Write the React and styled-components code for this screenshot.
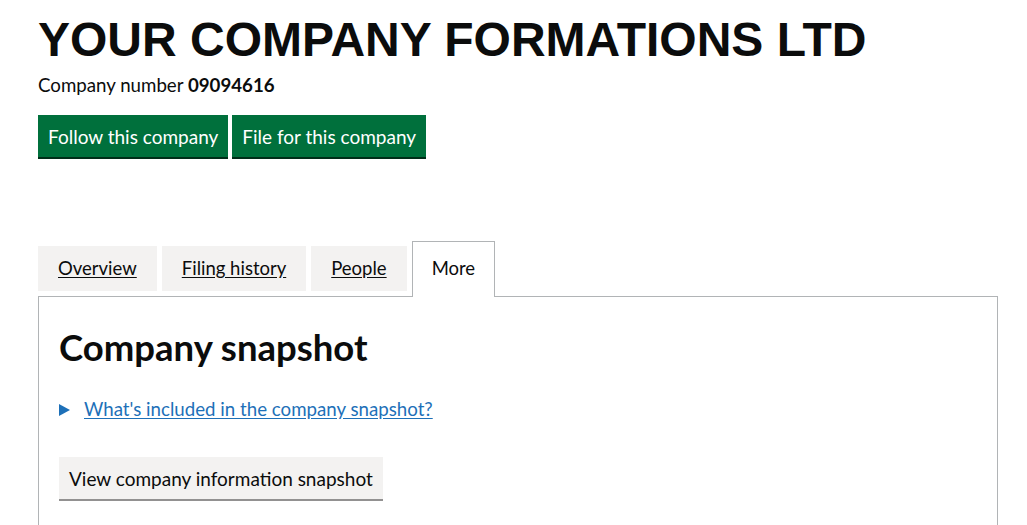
import React, { useState } from 'react';
import styled, { createGlobalStyle } from 'styled-components';

const GlobalStyle = createGlobalStyle`
    body {
        margin: 0;
        background: #ffffff;
        color: #0b0c0c;
        font-family: Lato, "Liberation Sans", Arial, sans-serif;
    }
`;

const Page = styled.main`
    width: 960px;
    margin-left: 38px;
    padding-top: 12px;
`;

const Title = styled.h1`
    margin: 0;
    font-family: "Liberation Sans", Arial, sans-serif;
    font-weight: 700;
    font-size: 48px;
    line-height: 56px;
`;

const CompanyNumber = styled.p`
    margin: 5px 0 0;
    font-size: 18.7px;
    line-height: 24px;

    strong {
        font-weight: 700;
    }
`;

const ButtonRow = styled.div`
    display: flex;
    gap: 4px;
    margin-top: 18px;
`;

const Button = styled.button`
    font-family: inherit;
    font-size: 19px;
    line-height: 25px;
    padding: 9px 10px 8px;
    border: 0;
    border-radius: 0;
    cursor: pointer;
    color: ${p => (p.$secondary ? '#0b0c0c' : '#ffffff')};
    background: ${p => (p.$secondary ? '#f3f2f1' : '#00703c')};
    box-shadow: 0 2px 0 ${p => (p.$secondary ? '#929191' : '#002d18')};
`;

const Tabs = styled.div`
    margin-top: 89px;
`;

const TabList = styled.ul`
    display: flex;
    align-items: flex-end;
    list-style: none;
    margin: 0;
    padding: 0;
`;

const Tab = styled.li`
    margin-right: 5px;
    font-size: 18.5px;
    line-height: 25px;
    ${p =>
        p.$active
            ? `
        padding: 14px 19px 16px;
        margin-top: -5px;
        margin-bottom: -1px;
        border: 1px solid #b1b4b6;
        border-bottom: 0;
        background: #ffffff;
        position: relative;
    `
            : `
        padding: 10px 20px;
        background: #f3f2f1;
        margin-bottom: 5px;
    `}
`;

const TabLink = styled.a`
    color: #0b0c0c;
    text-decoration: ${p => (p.$active ? 'none' : 'underline')};
    text-underline-offset: 2px;
    cursor: pointer;
`;

const Panel = styled.section`
    border: 1px solid #b1b4b6;
    padding: 30px 20px 40px;
    min-height: 200px;
`;

const PanelHeading = styled.h2`
    margin: 0 0 30px;
    font-size: 36.5px;
    line-height: 40px;
    font-weight: 700;
`;

const Details = styled.div`
    margin-bottom: 30px;
`;

const Summary = styled.a`
    display: inline-flex;
    align-items: center;
    gap: 14px;
    margin-bottom: 5px;
    font-size: 18.7px;
    line-height: 25px;
    color: #1d70b8;
    text-decoration: underline;
    text-underline-offset: 2px;
    cursor: pointer;
`;

const Arrow = styled.span`
    width: 0;
    height: 0;
    border-style: solid;
    border-width: 6.5px 0 6.5px 11px;
    border-color: transparent transparent transparent #1d70b8;
`;

const tabs = ['Overview', 'Filing history', 'People', 'More'];

const App = () => {
    const [active] = useState('More');

    return (
        <>
            <GlobalStyle />
            <Page>
                <Title>YOUR COMPANY FORMATIONS LTD</Title>
                <CompanyNumber>
                    Company number <strong>09094616</strong>
                </CompanyNumber>
                <ButtonRow>
                    <Button>Follow this company</Button>
                    <Button>File for this company</Button>
                </ButtonRow>
                <Tabs>
                    <TabList>
                        {tabs.map(t => (
                            <Tab key={t} $active={t === active}>
                                <TabLink $active={t === active}>{t}</TabLink>
                            </Tab>
                        ))}
                    </TabList>
                    <Panel>
                        <PanelHeading>Company snapshot</PanelHeading>
                        <Details>
                            <Summary>
                                <Arrow />
                                What's included in the company snapshot?
                            </Summary>
                        </Details>
                        <Button $secondary>View company information snapshot</Button>
                    </Panel>
                </Tabs>
            </Page>
        </>
    );
};

export default App;
